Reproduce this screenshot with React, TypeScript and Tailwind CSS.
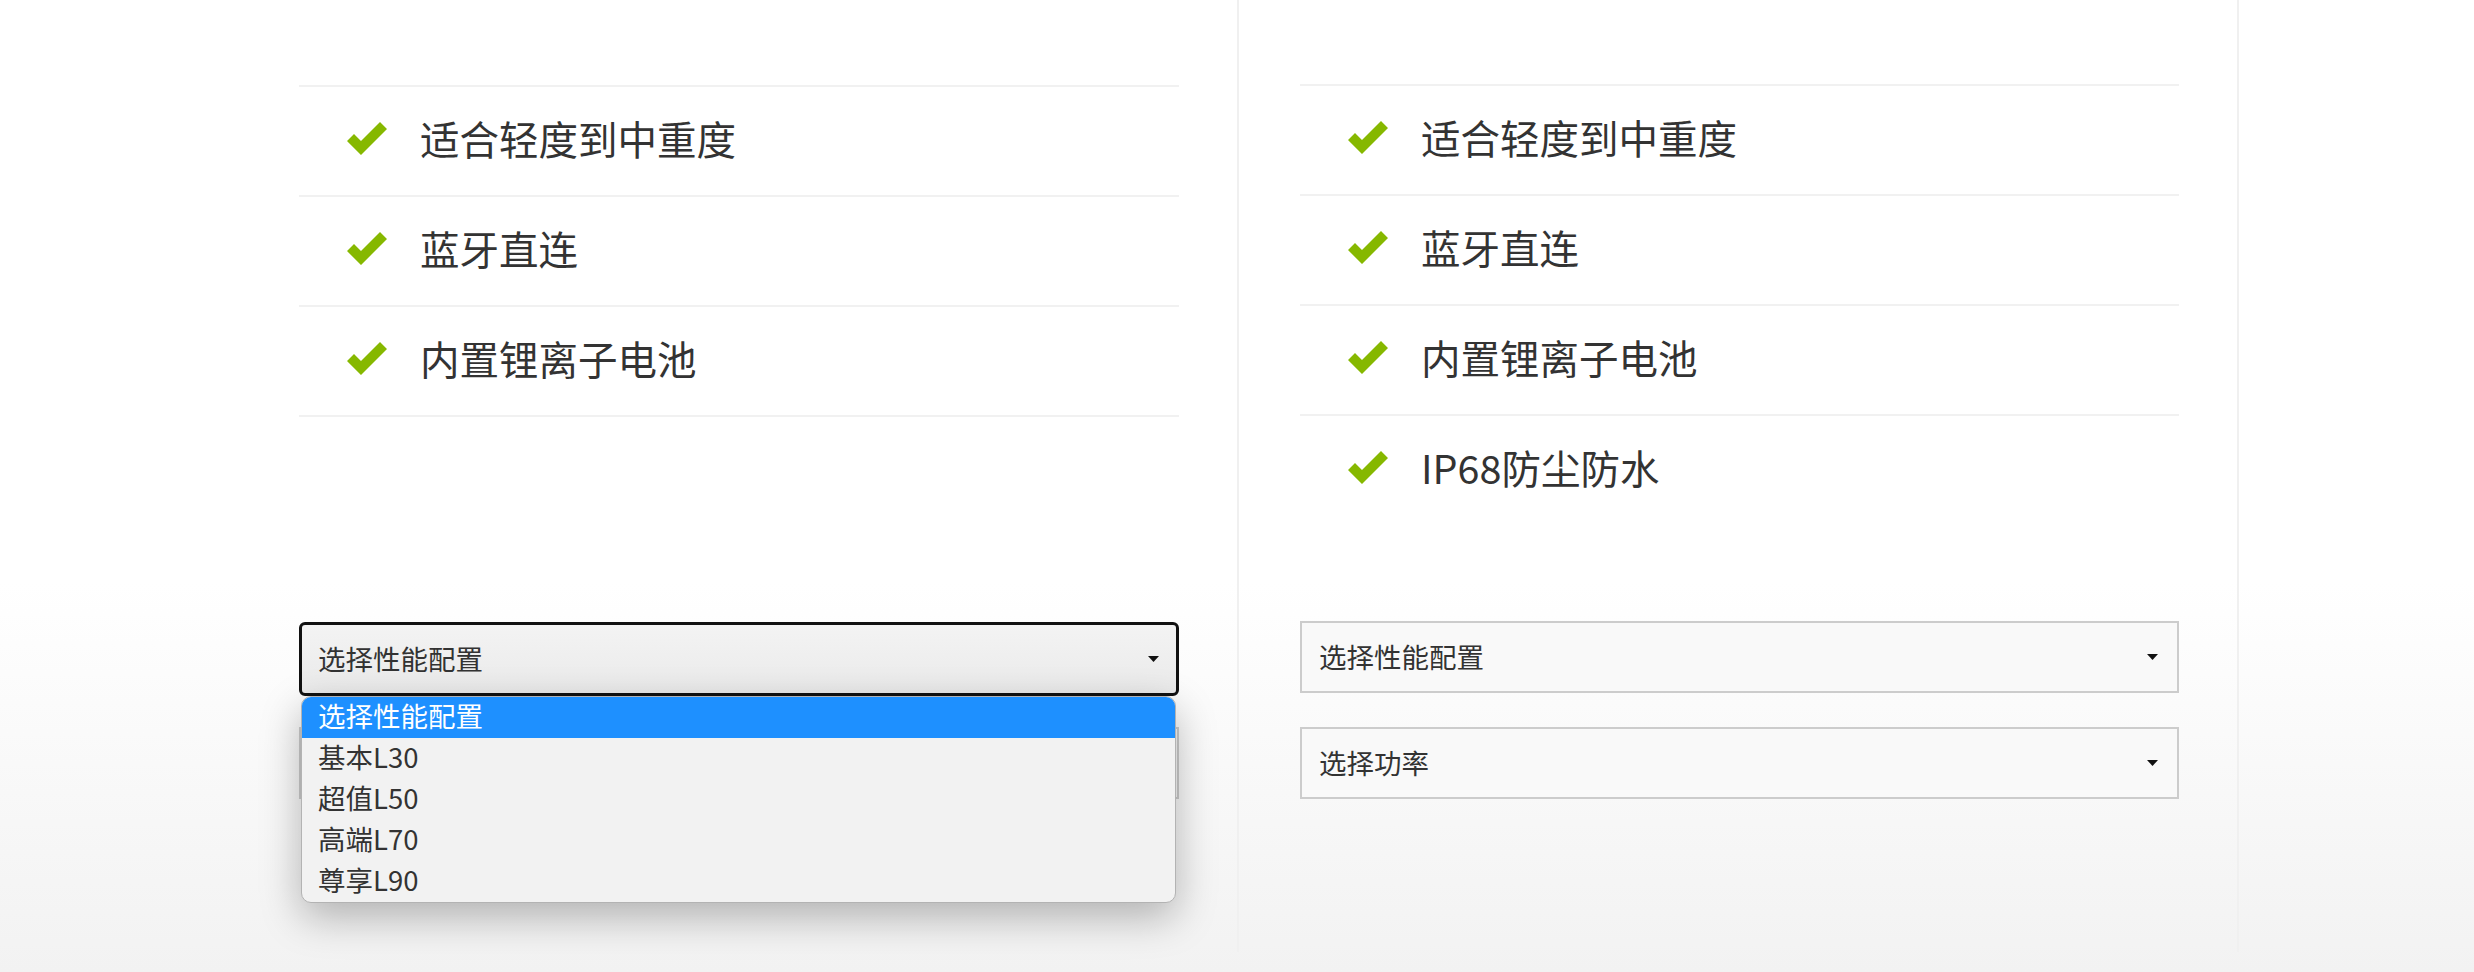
import React from "react";

const FONT = '"Noto Sans CJK SC", "Noto Sans", sans-serif';

function Check() {
  return (
    <svg width="40" height="33" viewBox="0 0 40 33" className="shrink-0">
      <polygon points="0,19 7,12 14,19 33,0 40,7 14,33" fill="#86b800" />
    </svg>
  );
}

function Row({ text }: { text: string }) {
  return (
    <li className="flex h-[110px] items-center border-t-2 border-[#f1f1f1] pb-[6px] pl-[48px]">
      <Check />
      <span className="ml-[33px] text-[39.5px] leading-none text-[#333]">{text}</span>
    </li>
  );
}

function Arrow() {
  return (
    <svg width="11" height="6" viewBox="0 0 11 6" className="shrink-0">
      <polygon points="0,0 11,0 5.5,6" fill="#111" />
    </svg>
  );
}

function Select({ label, focused }: { label: string; focused?: boolean }) {
  if (focused) {
    return (
      <div className="flex h-[74px] items-center justify-between rounded-[6px] border-[3px] border-[#111] bg-[linear-gradient(to_bottom,#f3f3f3,#eaeaea)] pl-[16px] pr-[17px]">
        <span className="text-[27.5px] leading-none text-[#333]">{label}</span>
        <Arrow />
      </div>
    );
  }
  return (
    <div className="flex h-[72px] items-center justify-between border-2 border-[#cccccc] bg-[#f9f9f9] pl-[17px] pr-[19px]">
      <span className="text-[27.5px] leading-none text-[#333]">{label}</span>
      <Arrow />
    </div>
  );
}

const options = ["选择性能配置", "基本L30", "超值L50", "高端L70", "尊享L90"];

export default function App() {
  return (
    <div
      className="min-h-[972px] w-full bg-[linear-gradient(to_bottom,#ffffff_0%,#ffffff_60%,#f2f2f2_100%)]"
      style={{ fontFamily: FONT }}
    >
      <div className="flex h-[952px]">
        <div className="w-[237px] shrink-0" />
        {/* Left column */}
        <div className="w-[1000px] shrink-0 pl-[62px] pr-[58px]">
          <div className="h-[622px] pt-[85px]">
            <ul className="border-b-2 border-[#f1f1f1]">
              <Row text="适合轻度到中重度" />
              <Row text="蓝牙直连" />
              <Row text="内置锂离子电池" />
            </ul>
          </div>
          <div className="relative">
            <Select label="选择性能配置" focused />
            <div className="mt-[31px]">
              <Select label="选择功率" />
            </div>
            <div className="absolute left-[2px] right-[3px] top-[74px] z-10 overflow-hidden rounded-[10px] border-[1.5px] border-[#b3b3b3] bg-[#f2f2f2] shadow-[0_14px_40px_rgba(0,0,0,0.28)]">
              {options.map((o, i) => (
                <div
                  key={o}
                  className={
                    i === 0
                      ? "flex h-[41px] items-center bg-[#1e90ff] pb-[3px] pl-[16px] text-[27.5px] leading-none text-white"
                      : "flex h-[41px] items-center pb-[3px] pl-[16px] text-[27.5px] leading-none text-[#333]"
                  }
                >
                  {o}
                </div>
              ))}
            </div>
          </div>
        </div>
        {/* Right column */}
        <div className="w-[1002px] shrink-0 border-x-2 border-[#f0f0f0] pl-[61px] pr-[58px]">
          <div className="h-[621px] pt-[84px]">
            <ul>
              <Row text="适合轻度到中重度" />
              <Row text="蓝牙直连" />
              <Row text="内置锂离子电池" />
              <Row text="IP68防尘防水" />
            </ul>
          </div>
          <Select label="选择性能配置" />
          <div className="mt-[34px]">
            <Select label="选择功率" />
          </div>
        </div>
      </div>
    </div>
  );
}
